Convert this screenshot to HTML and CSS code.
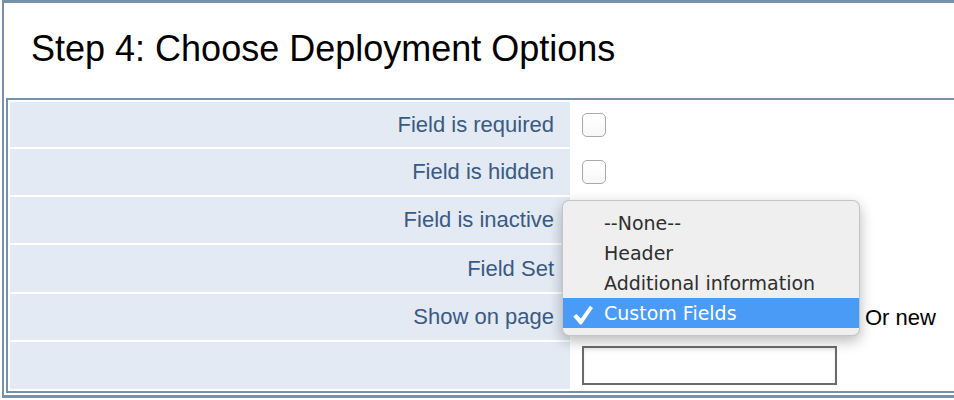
FILE: index.html
```html
<!DOCTYPE html>
<html>
<head>
<meta charset="utf-8">
<link rel="stylesheet" href="styles.css">
</head>
<body>
<div class="frame">
  <h1 class="title">Step 4: Choose Deployment Options</h1>
  <table class="opts">
    <tr class="r1"><td class="lbl">Field is required</td><td class="val"><input type="checkbox" class="cb"></td></tr>
    <tr class="r2"><td class="lbl">Field is hidden</td><td class="val"><input type="checkbox" class="cb"></td></tr>
    <tr class="r3"><td class="lbl">Field is inactive</td><td class="val"><input type="checkbox" class="cb"></td></tr>
    <tr class="r4"><td class="lbl">Field Set</td><td class="val"><span class="selbox"></span></td></tr>
    <tr class="r5"><td class="lbl">Show on page</td><td class="val"><div class="inline"><span class="selbox"></span><span class="ornew">Or new</span></div></td></tr>
    <tr class="r6"><td class="lbl"></td><td class="val"><input type="text" class="txt"></td></tr>
  </table>
</div>
<div class="popup">
  <div class="item">--None--</div>
  <div class="item">Header</div>
  <div class="item">Additional information</div>
  <div class="item sel">
    <svg class="check" viewBox="0 0 20 20" width="20" height="20"><path d="M0.3 11.6 L3.4 8.9 L7.9 13.6 L16.9 0.8 L20 3 L8.6 19.4 L6.9 19.4 Z" fill="#ffffff"/></svg>
    Custom Fields
  </div>
</div>
</body>
</html>
```
FILE: styles.css
```css
html, body {
  margin: 0;
  padding: 0;
  background: #ffffff;
  overflow: hidden;
}
body {
  position: relative;
  width: 954px;
  height: 400px;
}
.frame {
  margin-left: 2px;
  border-top: 3px solid #7890a8;
  border-left: 2px solid #7890a8;
  border-bottom: 3px solid #7890a8;
  padding: 0 0 2px 2px;
}
.title {
  margin: 25px 0 0 0;
  padding-left: 25px;
  font-family: "Liberation Sans", Arial, sans-serif;
  font-weight: normal;
  font-size: 36px;
  line-height: 41px;
  height: 41px;
  color: #000000;
}
.opts {
  margin-top: 29px;
  border: 2px solid #7890a8;
  border-right: none;
  border-spacing: 2px 2px;
  width: 100%;
  font-family: "Liberation Sans", Arial, sans-serif;
  font-size: 22px;
}
.opts td {
  padding: 0;
  vertical-align: middle;
}
.r1 { height: 45px; }
.r2 { height: 46px; }
.r3 { height: 46px; }
.r4 { height: 47px; }
.r5 { height: 46px; }
.r6 { height: 47px; }
.lbl {
  width: 560px;
  box-sizing: border-box;
  background: #e3eaf4;
  color: #3a5a82;
  text-align: right;
  padding-right: 16px !important;
}
.val {
  padding-left: 10px !important;
  color: #000000;
}
.cb {
  -webkit-appearance: none;
  appearance: none;
  display: block;
  width: 24px;
  height: 24px;
  margin: 0;
  box-sizing: border-box;
  border: 1px solid #a9a9a9;
  border-radius: 5px;
  background: linear-gradient(#ffffff, #f7f7f7);
}
.selbox {
  display: inline-block;
  width: 277px;
  height: 30px;
}
.inline {
  display: flex;
  align-items: center;
}
.ornew {
  margin-left: 6px;
  line-height: 26px;
  padding-top: 2px;
}
.txt {
  display: block;
  width: 255px;
  height: 39px;
  box-sizing: border-box;
  margin: 0;
  border: 2px solid #6a6a6a;
  background: #ffffff;
  box-shadow: inset 0 2px 3px rgba(0,0,0,0.08);
  outline: none;
}
.popup {
  position: absolute;
  left: 562px;
  top: 200px;
  width: 298px;
  height: 136px;
  box-sizing: border-box;
  padding-top: 7px;
  background: #efefef;
  border: 1px solid rgba(0,0,0,0.18);
  border-radius: 7px;
  box-shadow: 0 5px 14px rgba(0,0,0,0.28);
  font-family: "DejaVu Sans", sans-serif;
  font-size: 19px;
  color: #2e2e2e;
}
.item {
  position: relative;
  height: 30px;
  line-height: 30px;
  padding-left: 41px;
  white-space: nowrap;
}
.item.sel {
  background: #4a9bf6;
  color: #ffffff;
}
.check {
  position: absolute;
  left: 10px;
  top: 7px;
}
```
